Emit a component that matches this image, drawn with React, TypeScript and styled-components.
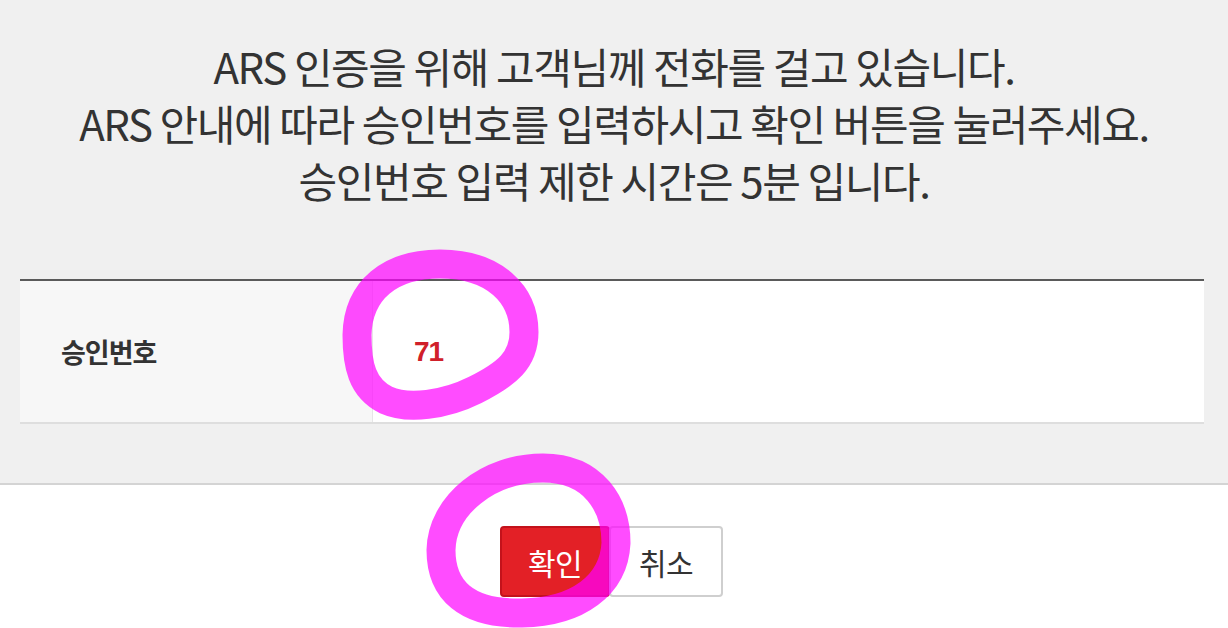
import React from "react";
import styled, { createGlobalStyle } from "styled-components";

const Global = createGlobalStyle`
  html, body { margin: 0; padding: 0; background: #ffffff; }
  body { font-family: "Noto Sans CJK KR", "Noto Sans", sans-serif; overflow: hidden; }
  #root { width: 1228px; height: 628px; position: relative; overflow: hidden; }
`;

const Page = styled.div`
  width: 1228px;
  height: 628px;
  display: flex;
  flex-direction: column;
  position: relative;
`;

const Upper = styled.section`
  background: #f0f0f0;
  height: 485px;
  border-bottom: 2px solid #d4d4d4;
  display: flex;
  flex-direction: column;
  padding-top: 37px;
  box-sizing: border-box;
`;

const Message = styled.p`
  margin: 0;
  text-align: center;
  font-family: "Noto Sans CJK KR", sans-serif;
  font-size: 42px;
  line-height: 57px;
  letter-spacing: -1.4px;
  color: #333333;
`;

const Table = styled.div`
  margin: 71px 24px 0 20px;
  border-top: 2px solid #5a5a5a;
  border-bottom: 2px solid #dedede;
  display: grid;
  grid-template-columns: 353px 1fr;
  height: 145px;
  box-sizing: border-box;
`;

const LabelCell = styled.div`
  background: #f7f7f7;
  border-right: 1px solid #e6e6e6;
  display: flex;
  align-items: center;
  padding-left: 41px;
  font-family: "Noto Sans CJK KR", sans-serif;
  font-weight: 700;
  font-size: 27px;
  letter-spacing: -1px;
  color: #333333;
`;

const ValueCell = styled.div`
  background: #ffffff;
  display: flex;
  align-items: center;
  padding-left: 41px;
  font-family: "Liberation Sans", Arial, sans-serif;
  font-weight: 700;
  font-size: 28px;
  letter-spacing: -1px;
  color: #d0202a;
`;

const Footer = styled.div`
  flex: 1;
  background: #ffffff;
  display: flex;
  justify-content: center;
  padding-top: 41px;
  padding-right: 5px;
  box-sizing: border-box;
`;

const Button = styled.button<{ $primary?: boolean }>`
  height: 71px;
  width: ${(p) => (p.$primary ? "110px" : "114px")};
  border-radius: 4px;
  border: 2px solid ${(p) => (p.$primary ? "#c3121b" : "#cfcfcf")};
  background: ${(p) => (p.$primary ? "#e32026" : "#ffffff")};
  color: ${(p) => (p.$primary ? "#ffffff" : "#333333")};
  font-family: "Noto Sans CJK KR", sans-serif;
  font-size: 30px;
  font-weight: 400;
  letter-spacing: -0.5px;
  margin-left: ${(p) => (p.$primary ? "0" : "-1px")};
  padding: 0;
  cursor: pointer;
`;

const Marks = styled.svg`
  position: absolute;
  left: 0;
  top: 0;
  pointer-events: none;
`;

export default function App() {
  return (
    <>
      <Global />
      <Page>
        <Upper>
          <Message>
            ARS 인증을 위해 고객님께 전화를 걸고 있습니다.
            <br />
            ARS 안내에 따라 승인번호를 입력하시고 확인 버튼을 눌러주세요.
            <br />
            승인번호 입력 제한 시간은 5분 입니다.
          </Message>
          <Table>
            <LabelCell>승인번호</LabelCell>
            <ValueCell>71</ValueCell>
          </Table>
        </Upper>
        <Footer>
          <Button $primary>확인</Button>
          <Button>취소</Button>
        </Footer>
        <Marks width="1228" height="628" viewBox="0 0 1228 628">
          <g fill="none" stroke="#ff00ff" strokeOpacity="0.7" strokeWidth="29" strokeLinecap="round" strokeLinejoin="round">
            <path d="M 440 264 C 495 264, 524 295, 524 332 C 524 360, 507 374, 475 390 C 445 405, 408 410, 386 400 C 362 388, 357 365, 357 335 C 358 290, 390 264, 440 264 Z" />
            <path d="M 543 468 C 594 468, 616 505, 616 543 C 614 585, 578 612, 522 613 C 466 614, 441 590, 441 550 C 442 505, 488 468, 543 468 Z" />
          </g>
        </Marks>
      </Page>
    </>
  );
}
